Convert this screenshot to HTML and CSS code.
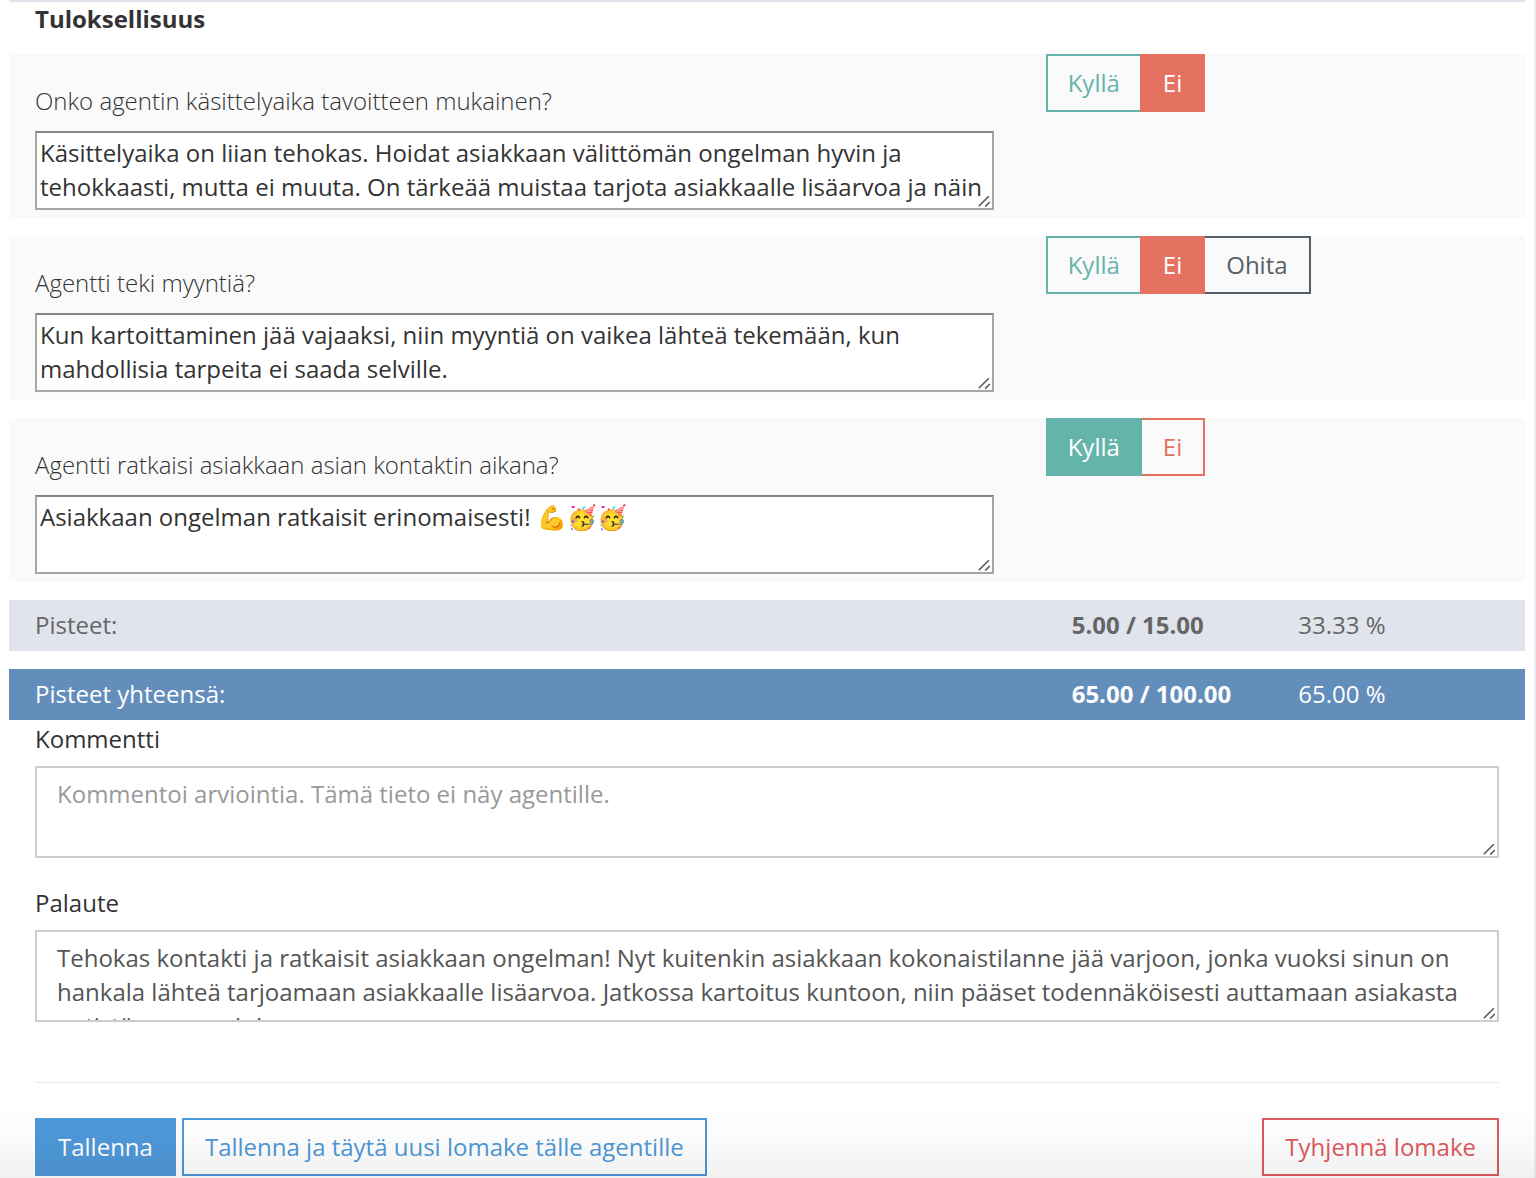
FILE: index.html
```html
<!DOCTYPE html>
<html lang="fi">
  <head>
    <meta charset="UTF-8" />
    <meta name="viewport" content="width=device-width, initial-scale=1.0" />
    <title>Arviointi</title>
    <link rel="stylesheet" href="styles.css">
  </head>
  <body>
    <svg class="defs" aria-hidden="true">
      <symbol id="grip" viewBox="0 0 14 14">
        <path d="M0.8 12.2 L10.8 2.2 M7.2 12.6 L11.8 8" fill="none" stroke="#5a5a5a" stroke-width="1.6" />
      </symbol>
    </svg>
    <form class="panel">
      <h2 class="title">Tuloksellisuus</h2>

      <div class="row question">
        <div class="col">
          <label for="q1">Onko agentin käsittelyaika tavoitteen mukainen?</label>
          <div class="field">
            <textarea id="q1" class="note">Käsittelyaika on liian tehokas. Hoidat asiakkaan välittömän ongelman hyvin ja tehokkaasti, mutta ei muuta. On tärkeää muistaa tarjota asiakkaalle lisäarvoa ja näin</textarea>
            <svg class="grip"><use href="#grip" /></svg>
          </div>
        </div>
        <div class="col btn-group">
          <button type="button" class="btn yes">Kyllä</button>
          <button type="button" class="btn no on">Ei</button>
        </div>
      </div>

      <div class="row question">
        <div class="col">
          <label for="q2">Agentti teki myyntiä?</label>
          <div class="field">
            <textarea id="q2" class="note">Kun kartoittaminen jää vajaaksi, niin myyntiä on vaikea lähteä tekemään, kun mahdollisia tarpeita ei saada selville.</textarea>
            <svg class="grip"><use href="#grip" /></svg>
          </div>
        </div>
        <div class="col btn-group">
          <button type="button" class="btn yes">Kyllä</button>
          <button type="button" class="btn no on">Ei</button>
          <button type="button" class="btn skip">Ohita</button>
        </div>
      </div>

      <div class="row question">
        <div class="col">
          <label for="q3">Agentti ratkaisi asiakkaan asian kontaktin aikana?</label>
          <div class="field">
            <textarea id="q3" class="note">Asiakkaan ongelman ratkaisit erinomaisesti! 💪🥳🥳</textarea>
            <svg class="grip"><use href="#grip" /></svg>
          </div>
        </div>
        <div class="col btn-group">
          <button type="button" class="btn yes on">Kyllä</button>
          <button type="button" class="btn no">Ei</button>
        </div>
      </div>

      <div class="row score">
        <div class="col">Pisteet:</div>
        <div class="col points">
          <strong>5.00 / 15.00</strong>
          <span>33.33 %</span>
        </div>
      </div>
      <div class="row score total">
        <div class="col">Pisteet yhteensä:</div>
        <div class="col points">
          <strong>65.00 / 100.00</strong>
          <span>65.00 %</span>
        </div>
      </div>

      <div class="group">
        <label for="comment">Kommentti</label>
        <div class="field">
          <textarea id="comment" class="control" placeholder="Kommentoi arviointia. Tämä tieto ei näy agentille."></textarea>
          <svg class="grip"><use href="#grip" /></svg>
        </div>
      </div>
      <div class="group">
        <label for="feedback">Palaute</label>
        <div class="field">
          <textarea id="feedback" class="control">Tehokas kontakti ja ratkaisit asiakkaan ongelman! Nyt kuitenkin asiakkaan kokonaistilanne jää varjoon, jonka vuoksi sinun on hankala lähteä tarjoamaan asiakkaalle lisäarvoa. Jatkossa kartoitus kuntoon, niin pääset todennäköisesti auttamaan asiakasta entistä paremmin!</textarea>
          <svg class="grip"><use href="#grip" /></svg>
        </div>
      </div>

      <div class="actions">
        <button type="button" class="btn save on">Tallenna</button>
        <button type="button" class="btn save">Tallenna ja täytä uusi lomake tälle agentille</button>
        <button type="reset" class="btn clear">Tyhjennä lomake</button>
      </div>
    </form>
    <div class="fade"></div>
  </body>
</html>
```

FILE: styles.css
```css
* {
  box-sizing: border-box;
}
body {
  margin: 0;
  font-family: "Open Sans", sans-serif;
  font-size: 24px;
  line-height: 34px;
  color: #333;
  background: #fff;
}
.defs {
  display: none;
}
.panel {
  padding: 0 9px 2px;
  border-right: 2px solid #ebedf5;
}
.title {
  margin: 0 0 18px;
  padding: 0 26px;
  border-top: 2px solid #e1e4ec;
  font-size: 24px;
  line-height: 34px;
  font-weight: bold;
}
.row {
  display: grid;
  grid-template-columns: 2fr 1fr;
  margin-bottom: 18px;
}
.col {
  min-width: 0;
  padding: 0 26px;
}
label {
  display: block;
}

/* questions */
.question {
  padding-bottom: 8px;
  background: #fafafa;
}
.question label {
  margin: 30px 0 13px;
  font-weight: 300;
}
.field {
  position: relative;
}
textarea {
  display: block;
  width: 100%;
  margin: 0;
  border: 2px solid #a6a6a6;
  border-radius: 0;
  outline: none;
  overflow: hidden;
  resize: vertical;
  font: inherit;
  color: inherit;
  background: #fff;
}
textarea::-webkit-resizer {
  background: transparent;
}
.note {
  height: 79px;
  padding: 3px;
  border-top-color: #858585;
}
.grip {
  position: absolute;
  right: 2px;
  bottom: 2px;
  width: 14px;
  height: 14px;
  pointer-events: none;
}

/* buttons */
.btn {
  padding: 10px 21px;
  border: 2px solid;
  border-radius: 0;
  font: inherit;
  background: transparent;
  cursor: pointer;
}
.btn-group {
  display: flex;
  align-items: flex-start;
}
.btn-group .btn + .btn {
  margin-left: -2px;
}
.btn-group .on {
  z-index: 1;
}
.yes {
  color: #65b4ac;
}
.btn-group .yes {
  padding: 10px 20px;
}
.no {
  color: #e57260;
}
.skip {
  color: #566068;
}
.save {
  color: #4f98d9;
}
.clear {
  margin-left: auto;
  color: #dd5a5e;
}
.btn.on {
  color: #fff;
}
.yes.on {
  border-color: #65b4ac;
  background: #65b4ac;
}
.no.on {
  border-color: #e57260;
  background: #e57260;
}
.save.on {
  border-color: #4f98d9;
  background: #4f98d9;
}

/* scores */
.score {
  padding: 8px 0 9px;
  color: #666;
  background: #e1e4ec;
}
.total {
  margin-bottom: 2px;
  color: #fff;
  background: #638dbb;
}
.points {
  display: grid;
  grid-template-columns: 1fr 1fr;
}
.points > * {
  padding-left: 26px;
  white-space: nowrap;
}

/* comment and feedback */
.group {
  margin: 0 26px 28px;
}
.group label {
  margin-bottom: 10px;
}
.control {
  height: 92px;
  padding: 9px 20px;
  border-color: #ccc;
  color: #555;
}
.control::placeholder {
  color: #999;
}
.actions {
  display: flex;
  gap: 6px;
  margin: 60px 26px 0;
  padding-top: 35px;
  border-top: 1px solid #e7ecf1;
}
.fade {
  position: fixed;
  left: 0;
  right: 0;
  bottom: 0;
  height: 68px;
  background: linear-gradient(rgba(0, 0, 0, 0), rgba(0, 0, 0, 0.02) 50%, rgba(0, 0, 0, 0.06));
  pointer-events: none;
}
```
